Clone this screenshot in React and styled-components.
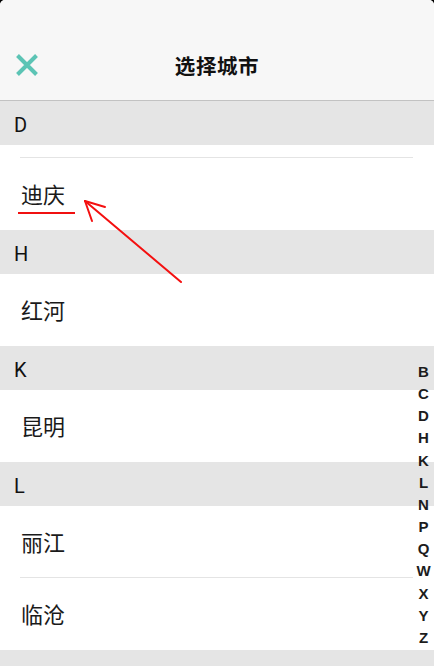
import React from "react";
import styled, { createGlobalStyle } from "styled-components";

const Global = createGlobalStyle`
  html, body { margin: 0; padding: 0; background: #000; }
  body { font-family: Roboto, "Noto Sans", "Noto Sans CJK SC", sans-serif; }
  * { box-sizing: border-box; }
`;

const Screen = styled.div`
  position: relative;
  width: 434px;
  height: 666px;
  overflow: hidden;
  background: #fff;
  border-top-left-radius: 5px;
  border-top-right-radius: 5px;
`;

const Header = styled.header`
  height: 101px;
  padding-top: 43px;
  background: #f7f7f7;
  border-bottom: 1px solid #c2c2c2;
`;

const NavRow = styled.div`
  position: relative;
  height: 44px;
  display: flex;
  align-items: center;
  justify-content: center;
`;

const CloseButton = styled.button`
  position: absolute;
  left: 15px;
  top: 10px;
  width: 24px;
  height: 24px;
  padding: 0;
  border: 0;
  background: none;
  display: flex;
`;

const Title = styled.h1`
  margin: 0;
  font-family: "Noto Sans CJK SC", sans-serif;
  font-size: 20.5px;
  font-weight: 700;
  color: #111;
  letter-spacing: 0.6px;
`;

const SectionHeader = styled.div`
  height: 44px;
  line-height: 44px;
  padding: 2px 0 0 14px;
  background: #e5e5e5;
  font-family: Roboto, "Noto Sans", sans-serif;
  font-size: 20px;
  color: #111;
`;

const Item = styled.div`
  position: relative;
  height: ${(p) => (p.$h ? p.$h : 72)}px;
  line-height: ${(p) => (p.$h ? p.$h : 72) - 1}px;
  margin: 0 21px 0 20px;
  padding-left: 1px;
  font-family: "Noto Sans CJK SC", sans-serif;
  font-size: 22px;
  color: #1a1a1a;
  border-bottom: 1px solid ${(p) => (p.$last ? "transparent" : "#e4e4e4")};
`;

const Underline = styled.span`
  position: absolute;
  left: -2px;
  top: 54px;
  width: 57px;
  height: 2px;
  background: #f01010;
`;

const IndexBar = styled.ul`
  position: absolute;
  right: 0;
  top: 361px;
  width: 21px;
  margin: 0;
  padding: 0;
  list-style: none;
  text-align: center;
`;

const IndexLetter = styled.li`
  height: 22.17px;
  line-height: 22.17px;
  font-family: "Liberation Sans", Arial, sans-serif;
  font-size: 15px;
  font-weight: 700;
  color: #1c1c1c;
`;

const Annotation = styled.svg`
  position: absolute;
  left: 0;
  top: 0;
  pointer-events: none;
`;

const sections = [
  { letter: "D", items: [{ name: "", h: 13 }, { name: "迪庆", mark: true }] },
  { letter: "H", items: [{ name: "红河" }] },
  { letter: "K", items: [{ name: "昆明" }] },
  { letter: "L", items: [{ name: "丽江" }, { name: "临沧" }] },
  { letter: "N", items: [] },
];

const letters = ["B", "C", "D", "H", "K", "L", "N", "P", "Q", "W", "X", "Y", "Z"];

export default function App() {
  return (
    <>
      <Global />
      <Screen>
        <Header>
          <NavRow>
            <CloseButton aria-label="关闭">
              <svg width="24" height="24" viewBox="0 0 24 24">
                <path d="M2.5 2.5 L21.5 21.5 M21.5 2.5 L2.5 21.5" stroke="#5cc4b5" strokeWidth="4" fill="none" />
              </svg>
            </CloseButton>
            <Title>选择城市</Title>
          </NavRow>
        </Header>
        {sections.map((s) => (
          <section key={s.letter}>
            <SectionHeader>{s.letter}</SectionHeader>
            {s.items.map((it, i) => (
              <Item key={i} $h={it.h} $last={i === s.items.length - 1}>
                {it.name}
                {it.mark && <Underline />}
              </Item>
            ))}
          </section>
        ))}
        <IndexBar>
          {letters.map((l) => (
            <IndexLetter key={l}>{l}</IndexLetter>
          ))}
        </IndexBar>
        <Annotation width="434" height="666" viewBox="0 0 434 666">
          <g stroke="#f41010" strokeWidth="2" fill="none" strokeLinecap="round">
            <path d="M181 282 L85 201" />
            <path d="M85 201 L105 207" />
            <path d="M85 201 L92 221" />
          </g>
        </Annotation>
      </Screen>
    </>
  );
}
